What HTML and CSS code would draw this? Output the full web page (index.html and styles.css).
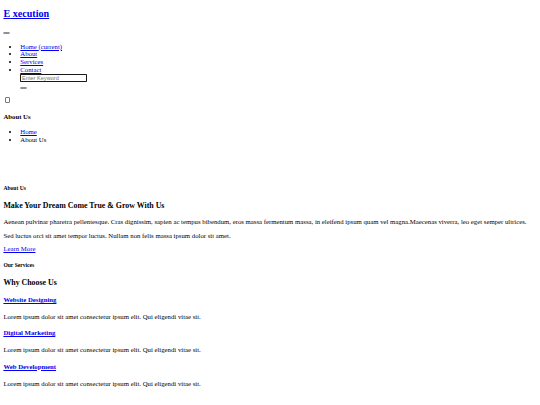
FILE: index.html
```html
<!DOCTYPE html>
<html lang="en">
<head>
<meta charset="utf-8">
<title>Execution - About Us</title>
<link rel="stylesheet" href="styles.css">
</head>
<body>
<header>
  <nav>
    <h1 class="logo"><a href="#"><span>E</span> xecution</a></h1>
    <div class="toggler-row"><button class="btn" type="button"></button></div>
    <div class="menu">
      <ul class="list nav-list">
        <li><a href="#">Home <span>(current)</span></a></li>
        <li><a href="#">About</a></li>
        <li><a href="#">Services</a></li>
        <li><a href="#">Contact</a></li>
        <form class="search">
          <div class="search-field"><input class="search-input" type="search" placeholder="Enter Keyword"></div>
          <div class="search-submit"><button class="btn" type="submit"></button></div>
        </form>
      </ul>
    </div>
  </nav>
</header>
<div class="toggle"><input class="check" type="checkbox"></div>
<section class="banner">
  <h4 class="banner-title">About Us</h4>
  <ul class="list crumbs">
    <li><a href="#">Home</a></li>
    <li>About Us</li>
  </ul>
</section>
<section class="about">
  <h5>About Us</h5>
  <h3>Make Your Dream Come True &amp; Grow With Us</h3>
  <p>Aenean pulvinar pharetra pellentesque. Cras dignissim, sapien ac tempus bibendum, eros massa fermentum massa, in eleifend ipsum quam vel magna.Maecenas viverra, leo eget semper ultrices.</p>
  <p class="last-text">Sed luctus orci sit amet tempor luctus. Nullam non felis massa ipsum dolor sit amet.</p>
  <a href="#">Learn More</a>
</section>
<section class="services">
  <h5>Our Services</h5>
  <h3>Why Choose Us</h3>
  <h4><a href="#">Website Designing</a></h4>
  <p>Lorem ipsum dolor sit amet consectetur ipsum elit. Qui eligendi vitae sit.</p>
  <h4><a href="#">Digital Marketing</a></h4>
  <p>Lorem ipsum dolor sit amet consectetur ipsum elit. Qui eligendi vitae sit.</p>
  <h4><a href="#">Web Development</a></h4>
  <p>Lorem ipsum dolor sit amet consectetur ipsum elit. Qui eligendi vitae sit.</p>
</section>
</body>
</html>
```

FILE: styles.css
```css
html {
  font-size: 6.75px;
}
body {
  margin: 0 3.4px 3.4px;
  font-family: "Liberation Serif", "Times New Roman", serif;
  font-size: 6.75px;
  line-height: 1.149;
  color: #000;
}
a {
  color: #0000ee;
}
.logo {
  font-size: 1.5em;
  margin: 8.2px 0 9.4px;
}
.toggler-row {
  height: 7.76px;
  display: flex;
  align-items: center;
}
.list {
  padding-left: 16.9px;
}
.nav-list {
  margin: 5.75px 0 5.4px;
}
.btn {
  display: block;
  box-sizing: border-box;
  width: 6.5px;
  height: 2.6px;
  padding: 0;
  border: 0.7px solid #8f8f9d;
  border-radius: 1px;
  background: #e9e9ed;
}
.search-field {
  height: 8px;
}
.search-submit {
  margin-top: 2.3px;
  height: 7.76px;
  display: flex;
  align-items: center;
}
.search-input {
  display: block;
  box-sizing: border-box;
  width: 67px;
  height: 8px;
  margin: 0;
  padding: 0 0.8px;
  border: 0.9px solid #1a1a1a;
  border-radius: 0.8px;
  font-family: "Liberation Sans", Arial, sans-serif;
  font-size: 5.6px;
  line-height: 6px;
  background: #fff;
}
.search-input::placeholder {
  color: #757575;
}
.toggle {
  padding-bottom: 1.4px;
}
.check {
  appearance: none;
  display: block;
  box-sizing: border-box;
  width: 5.4px;
  height: 5.4px;
  margin: 0 0 0 1.7px;
  border: 0.6px solid #767676;
  border-radius: 1px;
  background: #fff;
}
.banner-title {
  margin-bottom: 7.5px;
}
.crumbs {
  margin: 7.5px 0 6.75px;
}
.about {
  padding-top: 25.2px;
}
.last-text {
  margin-bottom: 5.2px;
}
```
